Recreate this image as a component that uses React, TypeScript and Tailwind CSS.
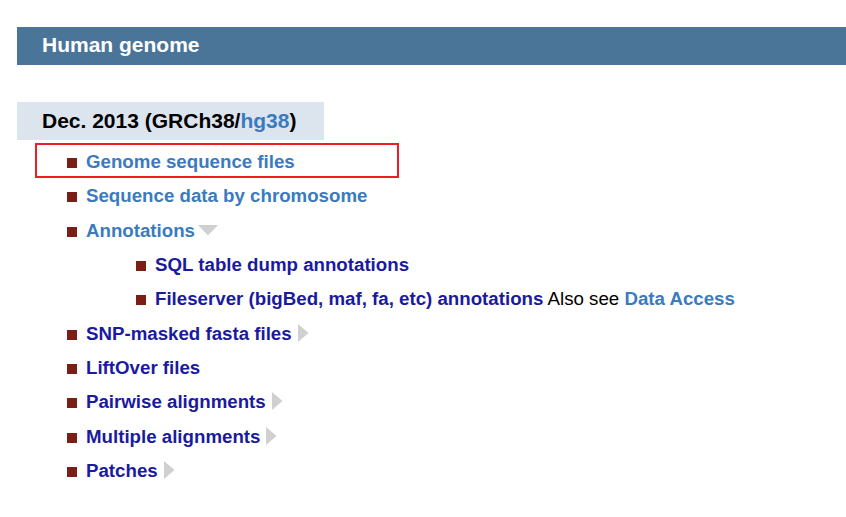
import React from "react";

const Bullet = () => (
  <span className="inline-block w-[10px] h-[10px] bg-[#7a1e16] mr-[9px]"></span>
);

const RightTri = () => (
  <svg width="11" height="18" viewBox="0 0 11 18" className="inline-block ml-[6px] align-[-2px]">
    <polygon points="0,0 10.5,9 0,18" fill="#d0d0d0" />
  </svg>
);

const DownTri = () => (
  <svg width="20" height="11" viewBox="0 0 20 11" className="inline-block ml-[3px] align-[1px]">
    <polygon points="0,0 20,0 10,10.5" fill="#d0d0d0" />
  </svg>
);

const light = "text-[#3a7bbf]";
const dark = "text-[#1a1aa0]";

export default function App() {
  return (
    <div className="w-[846px] h-[517px] bg-white overflow-hidden pt-[27px] pl-[17px] font-['Liberation_Sans',Arial,sans-serif]">
      <div className="h-[38px] bg-[#4b7499] text-white font-bold text-[21px] leading-[36px] pl-[25px]">
        Human genome
      </div>
      <div className="mt-[37px] w-[307px] h-[38px] bg-[#dce4ee] text-black font-bold text-[21px] leading-[38px] pl-[25px]">
        Dec. 2013 (GRCh38/<span className={light}>hg38</span>)
      </div>
      <div className="mt-[5px] font-bold text-[18.7px] leading-[34.33px] whitespace-nowrap">
        <div className="relative pl-[50px]">
          <div className="absolute left-[18px] top-[-2px] w-[364px] h-[35px] border-2 border-[#ee1d25]"></div>
          <Bullet />
          <span className={light}>Genome sequence files</span>
        </div>
        <div className="pl-[50px]">
          <Bullet />
          <span className={light}>Sequence data by chromosome</span>
        </div>
        <div className="pl-[50px]">
          <Bullet />
          <span className={light}>Annotations</span>
          <DownTri />
        </div>
        <div className="pl-[119px]">
          <Bullet />
          <span className={dark}>SQL table dump annotations</span>
        </div>
        <div className="pl-[119px]">
          <Bullet />
          <span className={dark}>Fileserver (bigBed, maf, fa, etc) annotations</span>
          <span className="font-normal text-black"> Also see </span>
          <span className={light}>Data Access</span>
        </div>
        <div className="pl-[50px]">
          <Bullet />
          <span className={dark}>SNP-masked fasta files</span>
          <RightTri />
        </div>
        <div className="pl-[50px]">
          <Bullet />
          <span className={dark}>LiftOver files</span>
        </div>
        <div className="pl-[50px]">
          <Bullet />
          <span className={dark}>Pairwise alignments</span>
          <RightTri />
        </div>
        <div className="pl-[50px]">
          <Bullet />
          <span className={dark}>Multiple alignments</span>
          <RightTri />
        </div>
        <div className="pl-[50px]">
          <Bullet />
          <span className={dark}>Patches</span>
          <RightTri />
        </div>
      </div>
    </div>
  );
}
